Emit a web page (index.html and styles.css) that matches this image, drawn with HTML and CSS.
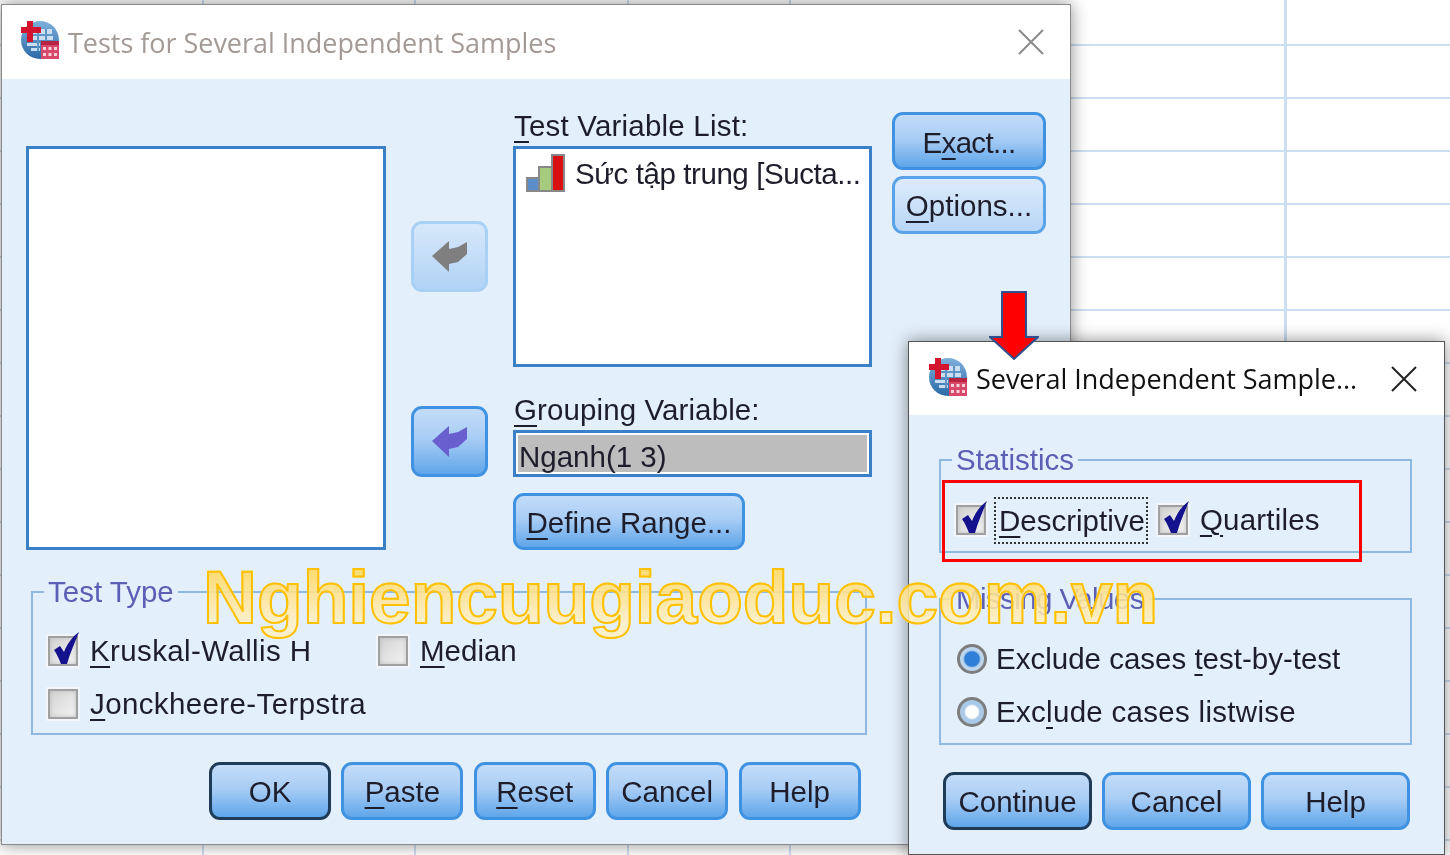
FILE: index.html
```html
<!DOCTYPE html>
<html lang="en">
<head>
    <meta charset="UTF-8">
    <title>Tests for Several Independent Samples</title>
    <link rel="stylesheet" href="styles.css">
</head>
<body>
    <svg class="sprite" width="0" height="0">
        <symbol id="app-icon" viewBox="0 0 40 40">
            <defs>
                <linearGradient id="globe" x1="0" y1="0" x2="0" y2="1">
                    <stop offset="0" stop-color="#7fb0dc"/>
                    <stop offset="1" stop-color="#2a6aa6"/>
                </linearGradient>
            </defs>
            <circle cx="20" cy="20" r="19" fill="url(#globe)"/>
            <path d="M13 9h19v5H13zM10 16h23v4H10zM7 23h13v3H7zM11 28h9v3h-9z" fill="#c9def1"/>
            <path d="M18 9v22M26 9v11" stroke="#5d94c4" stroke-width="2"/>
            <path d="M1 7h20v6H1z" fill="#d2142f"/>
            <path d="M7 1h6v21H7z" fill="#d2142f"/>
            <path d="M21 21h18v18H21z" fill="#d8486a"/>
            <path d="M21 21h18v4H21z" fill="#b8233f"/>
            <path d="M23 27h3v3h-3zM28.500 27h3v3h-3zM34 27h3v3h-3zM23 33h3v3h-3zM28.500 33h3v3h-3zM34 33h3v3h-3z" fill="#f8d3da"/>
        </symbol>
        <symbol id="close" viewBox="0 0 26 26">
            <path d="M1 1l24 24M25 1L1 25" fill="none" stroke="currentColor" stroke-width="2"/>
        </symbol>
        <symbol id="back" viewBox="0 0 35 31">
            <path d="M0 15L17 0v8l9-2 9-5v12l-9 8-9 2v8z" fill="currentColor"/>
        </symbol>
        <symbol id="check" viewBox="0 0 30 34">
            <path d="M4 18l6-4 4 6C17 12 22 5 29 0c-4 10-9 21-12 32h-6C9 27 7 22 4 18z" fill="#14128c"/>
        </symbol>
    </svg>

    <div class="sheet"></div>

    <section class="window window-main">
        <div class="titlebar">
            <svg class="app-icon"><use href="#app-icon"/></svg>
            <span class="title title-off">Tests for Several Independent Samples</span>
            <svg class="close close-off"><use href="#close"/></svg>
        </div>
        <div class="body">
            <div class="top-grid">
                <div class="list source-list"></div>
                <div class="arrows">
                    <button class="btn btn-soft arrow arrow-off"><svg><use href="#back"/></svg></button>
                    <button class="btn arrow arrow-on"><svg><use href="#back"/></svg></button>
                </div>
                <div class="targets">
                    <div class="field-label"><u>T</u>est Variable List:</div>
                    <div class="list target-list">
                        <div class="var-row">
                            <svg class="bars" viewBox="0 0 39 39">
                                <path d="M1 25h12v13H1z" fill="#5b8fc9" stroke="#888" stroke-width="2"/>
                                <path d="M13 14h13v24H13z" fill="#a6cb7f" stroke="#888" stroke-width="2"/>
                                <path d="M26 2h12v36H26z" fill="#d90f12" stroke="#888" stroke-width="2"/>
                            </svg>
                            <span class="var-name">Sức tập trung [Sucta...</span>
                        </div>
                    </div>
                    <div class="field-label second"><u>G</u>rouping Variable:</div>
                    <div class="group-input"><span>Nganh(1 3)</span></div>
                    <button class="btn define-btn"><span><u>D</u>efine Range...</span></button>
                </div>
                <div class="side-btns">
                    <button class="btn btn-exact">E<u>x</u>act...</button>
                    <button class="btn btn-light"><u>O</u>ptions...</button>
                </div>
            </div>

            <fieldset class="group test-type">
                <legend>Test Type</legend>
                <div class="opt"><span class="checkbox"><svg><use href="#check"/></svg></span><span><u>K</u>ruskal-Wallis H</span></div>
                <div class="opt opt-median"><span class="checkbox"></span><span><u>M</u>edian</span></div>
                <div class="opt"><span class="checkbox"></span><span><u>J</u>onckheere-Terpstra</span></div>
            </fieldset>

            <div class="btn-row main-btns">
                <button class="btn btn-default">OK</button>
                <button class="btn"><u>P</u>aste</button>
                <button class="btn"><u>R</u>eset</button>
                <button class="btn">Cancel</button>
                <button class="btn">Help</button>
            </div>
        </div>
    </section>

    <section class="window window-small">
        <div class="titlebar">
            <svg class="app-icon"><use href="#app-icon"/></svg>
            <span class="title">Several Independent Sample...</span>
            <svg class="close"><use href="#close"/></svg>
        </div>
        <div class="body">
            <fieldset class="group statistics">
                <legend>Statistics</legend>
                <div class="opt-row">
                    <span class="checkbox"><svg><use href="#check"/></svg></span>
                    <span class="focused"><u>D</u>escriptive</span>
                    <span class="checkbox"><svg><use href="#check"/></svg></span>
                    <span class="plain"><u>Q</u>uartiles</span>
                </div>
            </fieldset>

            <fieldset class="group missing">
                <legend>Missing Values</legend>
                <div class="opt opt-radio"><span class="radio radio-on"></span><span>Exclude cases <u>t</u>est-by-test</span></div>
                <div class="opt opt-radio"><span class="radio"></span><span class="listwise">Exc<u>l</u>ude cases listwise</span></div>
            </fieldset>

            <div class="btn-row small-btns">
                <button class="btn btn-default">Continue</button>
                <button class="btn">Cancel</button>
                <button class="btn">Help</button>
            </div>
        </div>
    </section>

    <!-- annotations drawn on top of the screenshot -->
    <div class="red-box"></div>
    <svg class="red-arrow" viewBox="0 0 50 70">
        <path d="M13 1h24v45h12L25 68 1 46h12z" fill="#f00" stroke="#2f4f8f" stroke-width="2"/>
    </svg>
    <div class="watermark">Nghiencuugiaoduc.com.vn</div>
</body>
</html>
```

FILE: styles.css
```css
* {
    box-sizing: border-box;
}

html, body {
    margin: 0;
    padding: 0;
    height: 100%;
    overflow: hidden;
}

body {
    position: relative;
    background-color: #fff;
    font-family: "Liberation Sans", Arial, sans-serif;
    font-size: 29.5px;
    color: #1d1d2b;
}

.sprite {
    position: absolute;
}

u {
    text-decoration-thickness: 2px;
    text-underline-offset: 5px;
}

/* spreadsheet behind the dialogs */
.sheet {
    position: absolute;
    inset: 0;
    background-image:
        linear-gradient(#cbdef2, #cbdef2),
        linear-gradient(#cbdef2, #cbdef2),
        linear-gradient(#cbdef2, #cbdef2),
        linear-gradient(#cbdef2, #cbdef2),
        linear-gradient(#cbdef2, #cbdef2),
        linear-gradient(to bottom, #cbdef2 2px, transparent 2px);
    background-size: 2px 100%, 2px 100%, 2px 100%, 2px 100%, 3px 100%, 100% 53px;
    background-position: 202px 0, 414px 0, 627px 0, 789px 0, 1284px 0, 0 -9px;
    background-repeat: no-repeat, no-repeat, no-repeat, no-repeat, no-repeat, repeat-y;
}

.window {
    position: absolute;
    background-color: #e3effb;
    border: 1px solid #8a8a8a;
    box-shadow: 0 0 16px rgba(0, 0, 0, 0.45);
}

.window-main {
    left: 1px;
    top: 4px;
    width: 1070px;
    height: 841px;
}

.window-small {
    left: 908px;
    top: 341px;
    width: 537px;
    height: 514px;
    border-color: #555;
}

.titlebar {
    display: flex;
    align-items: center;
    background-color: #fff;
    filter: blur(0.4px);
}

.window-main .titlebar {
    height: 74px;
    padding: 0 26px 0 18px;
}

.window-small .titlebar {
    height: 73px;
    padding: 0 27px 0 19px;
}

.app-icon {
    width: 40px;
    height: 40px;
    margin-bottom: 4px;
    flex-shrink: 0;
}

.title {
    flex: 1;
    margin-left: 8px;
    font-family: "Open Sans", "Noto Sans", sans-serif;
    font-size: 27px;
    letter-spacing: -0.03px;
    color: #111;
    white-space: nowrap;
}

.title-off {
    color: #a39a96;
}

.close {
    width: 26px;
    height: 26px;
    color: #222;
}

.close-off {
    color: #8b8b8b;
}

.body {
    filter: blur(0.5px);
}

.window-main .body {
    padding: 33px 0 0 24px;
}

.window-small .body {
    padding: 30px 32px 0 30px;
}

/* buttons */
.btn {
    display: block;
    width: 100%;
    padding: 2px 0 0;
    font: inherit;
    color: inherit;
    white-space: nowrap;
    border: 3px solid #3f92e2;
    border-radius: 11px;
    background: linear-gradient(#c3dcf9, #a9cdf5 45%, #5fa6ea);
}

.btn-light {
    background: linear-gradient(#dcebfb, #b8d6f6);
    border-color: #5aa3e8;
}

.btn-soft {
    background: linear-gradient(#d7e8fb, #b1d3f5);
    border-color: #a9d0f5;
}

.btn-default {
    border-color: #1e3b58;
}

.btn-exact {
    padding-top: 4px;
    letter-spacing: -0.7px;
}

/* top part of the main dialog */
.top-grid {
    display: grid;
    grid-template-columns: 360px 127px 359px 154px;
    height: 438px;
}

.list {
    background-color: #fff;
    border: 3px solid #3a80c6;
}

.source-list {
    margin-top: 34px;
}

.arrows {
    display: flex;
    flex-direction: column;
    gap: 114px;
    padding: 109px 0 0 25px;
}

.arrow {
    display: flex;
    align-items: center;
    justify-content: center;
    width: 77px;
    height: 71px;
    padding: 0;
}

.arrow svg {
    width: 35px;
    height: 31px;
}

.arrow-off {
    color: #7f7f7f;
}

.arrow-on {
    color: #6a5fcf;
}

.field-label {
    height: 28px;
    margin-bottom: 6px;
    padding-left: 1px;
    line-height: 28px;
    letter-spacing: 0.2px;
    white-space: nowrap;
}

.field-label.second {
    margin-top: 29px;
    letter-spacing: 0.1px;
}

.target-list {
    height: 221px;
}

.var-row {
    display: flex;
    align-items: center;
    gap: 10px;
    padding: 4px 0 0 10px;
    white-space: nowrap;
}

.var-name {
    padding-top: 2px;
    letter-spacing: -0.42px;
}

.bars {
    width: 39px;
    height: 39px;
    flex-shrink: 0;
}

.group-input {
    height: 47px;
    padding: 2px 0 0 3px;
    line-height: 44px;
    background-color: #bdbdbd;
    border: 3px solid #3a80c6;
    box-shadow: inset 0 0 0 2px #fff;
}

.define-btn {
    width: 232px;
    height: 57px;
    margin-top: 16px;
}

.side-btns {
    display: flex;
    flex-direction: column;
    gap: 6px;
    width: 154px;
    margin-left: 20px;
}

.side-btns .btn {
    height: 58px;
}

/* group boxes */
.group {
    margin: 0;
    padding: 0 0 0 15px;
    border: 2px solid #8fb8e2;
}

.group legend {
    margin-left: -4px;
    padding: 0 4px;
    height: 30px;
    line-height: 30px;
    color: #5b5fb6;
}

.test-type {
    display: grid;
    grid-template-columns: 330px 1fr;
    row-gap: 23px;
    width: 836px;
    margin-top: 27px;
    margin-left: 5px;
    padding-top: 29px;
    padding-bottom: 14px;
    letter-spacing: 0.38px;
}

.test-type legend {
    letter-spacing: 0;
}

.test-type .opt-median {
    letter-spacing: 0;
}

.statistics {
    padding-top: 22px;
    padding-bottom: 8px;
}

.missing {
    display: flex;
    flex-direction: column;
    gap: 23px;
    margin-top: 31px;
    padding-top: 30px;
    padding-bottom: 16px;
}

.missing legend {
    letter-spacing: -0.6px;
}

.opt {
    display: flex;
    align-items: center;
    gap: 12px;
    height: 30px;
    white-space: nowrap;
}

.opt-radio {
    gap: 9px;
    padding-left: 1px;
}

.listwise {
    letter-spacing: 0.3px;
}

.opt-row {
    display: flex;
    align-items: center;
    height: 46px;
    white-space: nowrap;
}

.focused {
    margin: 0 10px 0 8px;
    padding: 0 1px 0 3px;
    line-height: 43px;
    border: 2px dotted #333;
}

.plain {
    margin-left: 12px;
    letter-spacing: 0.2px;
}

.checkbox {
    position: relative;
    display: block;
    width: 30px;
    height: 30px;
    flex-shrink: 0;
    background: linear-gradient(135deg, #d2d2d2, #f4f4f4);
    border: 2px solid #a0a0a0;
    box-shadow: 0 0 0 2px #f2f6fb, inset 0 0 4px #bdbdbd;
}

.checkbox svg {
    position: absolute;
    left: 0;
    top: -6px;
    width: 30px;
    height: 34px;
}

.radio {
    display: block;
    width: 30px;
    height: 30px;
    flex-shrink: 0;
    border-radius: 50%;
    border: 3px solid #7d7d7d;
    background: radial-gradient(circle, #fff 0 6px, #a9c9e6 8px 12px);
}

.radio-on {
    background: radial-gradient(circle, #2f7fd8 0 7px, #bcd6ee 9px 12px);
}

.btn-row {
    display: flex;
    gap: 10px;
}

.btn-row .btn {
    height: 58px;
}

.main-btns {
    gap: 10.4px;
    margin: 27px 0 0 183px;
}

.main-btns .btn {
    width: 122px;
}

.small-btns {
    margin: 27px 0 0 4px;
}

.small-btns .btn {
    width: 149px;
}

/* annotations */
.red-box {
    position: absolute;
    left: 942px;
    top: 480px;
    width: 420px;
    height: 82px;
    border: 3px solid #f00;
}

.red-arrow {
    position: absolute;
    left: 989px;
    top: 291px;
    width: 50px;
    height: 70px;
}

.watermark {
    position: absolute;
    left: 203px;
    top: 554px;
    font-size: 74.750px;
    line-height: 86px;
    font-weight: bold;
    white-space: nowrap;
    background: linear-gradient(rgba(255, 217, 102, 0.9) 20%, rgba(255, 240, 196, 0.85) 80%);
    -webkit-background-clip: text;
    background-clip: text;
    color: transparent;
    -webkit-text-stroke: 2px #ffc000;
}
```
